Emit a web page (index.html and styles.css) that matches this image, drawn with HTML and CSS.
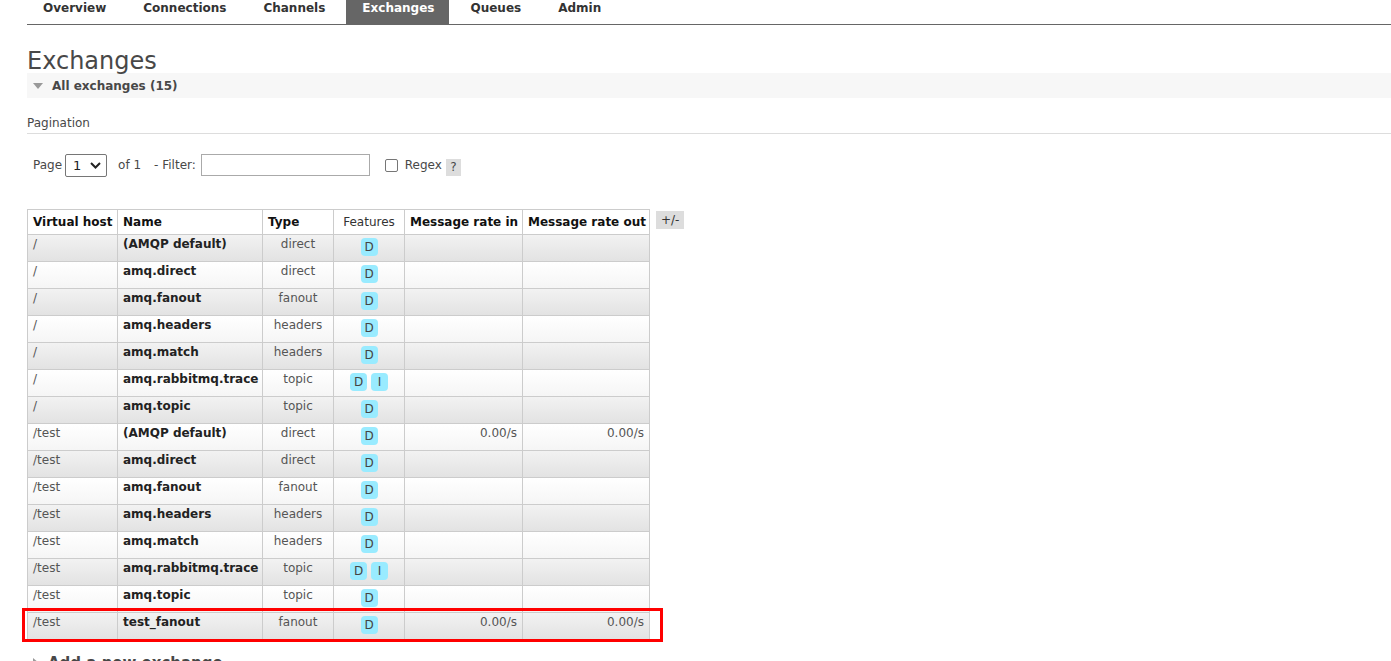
FILE: index.html
```html
<!DOCTYPE html>
<html>
<head>
<meta charset="utf-8">
<link rel="stylesheet" href="styles.css">
</head>
<body>
<div class="page">
  <ul class="menu">
    <li><a>Overview</a></li>
    <li><a>Connections</a></li>
    <li><a>Channels</a></li>
    <li class="selected"><a>Exchanges</a></li>
    <li><a>Queues</a></li>
    <li><a>Admin</a></li>
  </ul>
  <h1 class="title">Exchanges</h1>
  <div class="section-head"><span class="tri"></span><span>All exchanges (15)</span></div>
  <div class="pag-title">Pagination</div>
  <div class="controls">
    <span class="lbl">Page</span>
    <span class="select">1 <svg width="11" height="7" viewBox="0 0 11 7"><path d="M1 1 L5.5 5.5 L10 1" fill="none" stroke="#222" stroke-width="2"/></svg></span>
    <span class="lbl of">of 1</span>
    <span class="lbl">- Filter:</span>
    <span class="input"></span>
    <span class="check"></span>
    <span class="lbl">Regex</span>
    <span class="help">?</span>
  </div>
  <div class="table-wrap">
    <table class="list">
      <colgroup>
        <col class="c-vh"><col class="c-name"><col class="c-type"><col class="c-feat"><col class="c-in"><col class="c-out">
      </colgroup>
      <thead>
        <tr>
          <th>Virtual host</th>
          <th>Name</th>
          <th>Type</th>
          <th class="plain">Features</th>
          <th>Message rate in</th>
          <th>Message rate out</th>
        </tr>
      </thead>
      <tbody>
        <tr class="alt1"><td>/</td><td class="nm">(AMQP default)</td><td class="ty">direct</td><td class="ft"><span class="b">D</span></td><td></td><td></td></tr>
        <tr class="alt2"><td>/</td><td class="nm">amq.direct</td><td class="ty">direct</td><td class="ft"><span class="b">D</span></td><td></td><td></td></tr>
        <tr class="alt1"><td>/</td><td class="nm">amq.fanout</td><td class="ty">fanout</td><td class="ft"><span class="b">D</span></td><td></td><td></td></tr>
        <tr class="alt2"><td>/</td><td class="nm">amq.headers</td><td class="ty">headers</td><td class="ft"><span class="b">D</span></td><td></td><td></td></tr>
        <tr class="alt1"><td>/</td><td class="nm">amq.match</td><td class="ty">headers</td><td class="ft"><span class="b">D</span></td><td></td><td></td></tr>
        <tr class="alt2"><td>/</td><td class="nm">amq.rabbitmq.trace</td><td class="ty">topic</td><td class="ft"><span class="b">D</span><span class="b">I</span></td><td></td><td></td></tr>
        <tr class="alt1"><td>/</td><td class="nm">amq.topic</td><td class="ty">topic</td><td class="ft"><span class="b">D</span></td><td></td><td></td></tr>
        <tr class="alt2"><td>/test</td><td class="nm">(AMQP default)</td><td class="ty">direct</td><td class="ft"><span class="b">D</span></td><td class="r">0.00/s</td><td class="r">0.00/s</td></tr>
        <tr class="alt1"><td>/test</td><td class="nm">amq.direct</td><td class="ty">direct</td><td class="ft"><span class="b">D</span></td><td></td><td></td></tr>
        <tr class="alt2"><td>/test</td><td class="nm">amq.fanout</td><td class="ty">fanout</td><td class="ft"><span class="b">D</span></td><td></td><td></td></tr>
        <tr class="alt1"><td>/test</td><td class="nm">amq.headers</td><td class="ty">headers</td><td class="ft"><span class="b">D</span></td><td></td><td></td></tr>
        <tr class="alt2"><td>/test</td><td class="nm">amq.match</td><td class="ty">headers</td><td class="ft"><span class="b">D</span></td><td></td><td></td></tr>
        <tr class="alt1"><td>/test</td><td class="nm">amq.rabbitmq.trace</td><td class="ty">topic</td><td class="ft"><span class="b">D</span><span class="b">I</span></td><td></td><td></td></tr>
        <tr class="alt2"><td>/test</td><td class="nm">amq.topic</td><td class="ty">topic</td><td class="ft"><span class="b">D</span></td><td></td><td></td></tr>
        <tr class="alt1"><td>/test</td><td class="nm">test_fanout</td><td class="ty">fanout</td><td class="ft"><span class="b">D</span></td><td class="r">0.00/s</td><td class="r">0.00/s</td></tr>
      </tbody>
    </table>
    <span class="plusminus">+/-</span>
    <div class="highlight"></div>
  </div>
  <div class="section-head add"><span class="tri right"></span><span>Add a new exchange</span></div>
</div>
</body>
</html>
```
FILE: styles.css
```css
html, body {
  margin: 0;
  padding: 0;
  background: #fff;
}
body {
  font-family: "DejaVu Sans", Verdana, sans-serif;
  font-size: 12px;
  color: #484848;
  overflow: hidden;
}
.page {
  padding-left: 27px;
}
.menu {
  list-style: none;
  margin: 0;
  padding: 0;
  display: flex;
  height: 24px;
  border-bottom: 1px solid #666;
}
.menu li a {
  display: block;
  height: 24px;
  line-height: 16px;
  padding: 0 16px;
  font-weight: bold;
  font-size: 12px;
  color: #333;
  margin-right: 5px;
}
.menu li.selected a {
  background: #666;
  color: #fff;
  padding: 0 15px 0 16px;
}
.title {
  font-size: 24px;
  font-weight: normal;
  margin: 0;
  padding: 24px 0 0 0;
  line-height: 24px;
  color: #484848;
}
.section-head {
  display: flex;
  align-items: center;
  height: 25px;
  background: #f7f7f7;
  font-weight: bold;
  font-size: 12px;
  color: #484848;
  gap: 9px;
  padding-left: 6px;
}
.tri {
  width: 0;
  height: 0;
  border-left: 5px solid transparent;
  border-right: 5px solid transparent;
  border-top: 6px solid #999;
}
.tri.right {
  border-top: 5px solid transparent;
  border-bottom: 5px solid transparent;
  border-left: 6px solid #999;
  border-right: 0;
}
.pag-title {
  margin-top: 18px;
  padding-bottom: 3px;
  border-bottom: 1px solid #ddd;
  line-height: 14px;
}
.controls {
  display: flex;
  align-items: center;
  height: 24px;
  margin-top: 19px;
  padding-left: 6px;
}
.lbl { white-space: nowrap; }
.select {
  display: flex;
  align-items: center;
  justify-content: space-between;
  width: 28px;
  height: 21px;
  border: 1px solid #767676;
  border-radius: 2px;
  padding: 0 5px 0 7px;
  margin-left: 3px;
  color: #222;
  font-size: 13px;
}
.of { margin-left: 11px; margin-right: 13px; }
.input {
  width: 167px;
  height: 20px;
  border: 1px solid #aaa;
  margin-left: 5px;
}
.check {
  width: 11px;
  height: 11px;
  border: 1px solid #767676;
  border-radius: 2px;
  margin-left: 15px;
  margin-right: 7px;
}
.help {
  background: #ddd;
  margin-left: 4px;
  width: 15px;
  height: 17px;
  line-height: 17px;
  text-align: center;
  margin-top: 4px;
}
.table-wrap {
  position: relative;
  display: flex;
  align-items: flex-start;
  margin-top: 32px;
  margin-bottom: 10px;
}
table.list {
  border-collapse: collapse;
  border: 1px solid #ccc;
  table-layout: fixed;
  width: 623px;
}
col.c-vh { width: 90px; }
col.c-name { width: 145px; }
col.c-type { width: 71px; }
col.c-feat { width: 71px; }
col.c-in { width: 118px; }
col.c-out { width: 127px; }
table.list th, table.list td {
  border: 1px solid #ccc;
  padding: 0 5px;
  white-space: nowrap;
  overflow: visible;
  text-align: left;
}
table.list th {
  height: 24px;
  color: #111;
  font-weight: bold;
  background: #fff;
}
table.list th.plain { font-weight: normal; color: #333; text-align: center; }
table.list td {
  height: 27px;
  vertical-align: top;
  padding-top: 2px;
  box-sizing: border-box;
  color: #555;
}
tr.alt1 { background: linear-gradient(to bottom, #f2f2f2, #e2e2e2); }
tr.alt2 { background: linear-gradient(to bottom, #ffffff, #f5f5f5); }
table.list td.nm { font-weight: bold; color: #222; }
table.list td.ty { text-align: center; color: #555; }
table.list td.ft { text-align: center; padding-top: 3px; }
table.list td.r { text-align: right; }
.b {
  display: inline-block;
  background: #99ebff;
  border-radius: 4px;
  min-width: 13px;
  height: 18px;
  line-height: 18px;
  padding: 0 2px;
  margin: 0 2px;
  color: #444;
  font-size: 12px;
  text-align: center;
}
.plusminus {
  background: #ddd;
  margin-left: 6px;
  margin-top: 2px;
  padding: 0 5px;
  height: 18px;
  line-height: 18px;
  color: #333;
}
.highlight {
  position: absolute;
  left: -5px;
  top: 399px;
  width: 635px;
  height: 28px;
  border: 3px solid #f00;
}
.section-head.add {
  background: #fff;
  font-size: 15px;
}
```
